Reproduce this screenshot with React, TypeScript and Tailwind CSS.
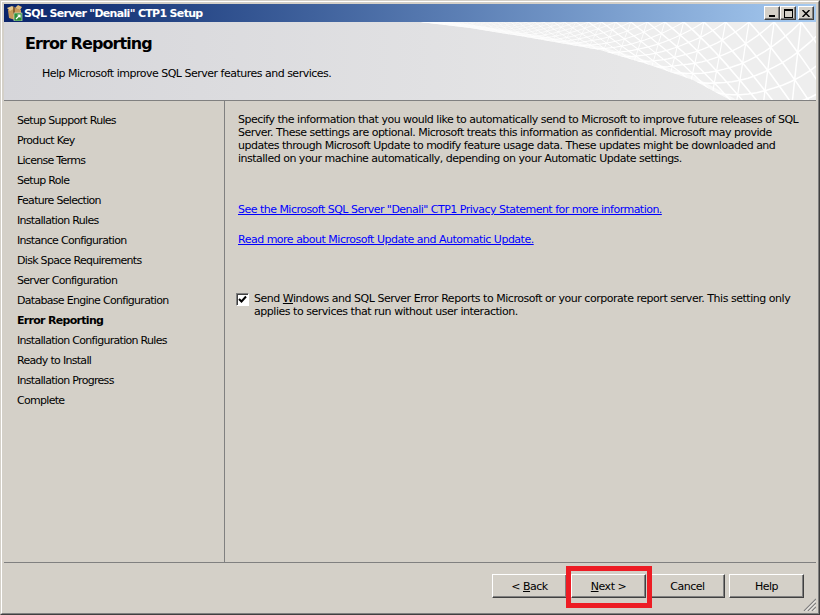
const steps = [
    "Setup Support Rules",
    "Product Key",
    "License Terms",
    "Setup Role",
    "Feature Selection",
    "Installation Rules",
    "Instance Configuration",
    "Disk Space Requirements",
    "Server Configuration",
    "Database Engine Configuration",
    "Error Reporting",
    "Installation Configuration Rules",
    "Ready to Install",
    "Installation Progress",
    "Complete",
];

// lower edge of the mesh, as points read off the screenshot (header coords, y minus 22)
const edge = [
    [420, 0],
    [470, 6],
    [520, 14],
    [600, 28],
    [650, 43],
    [693, 58],
    [730, 78],
    [780, 110],
    [830, 150],
];

const edgeY = (x: number) => {
    for (let i = 1; i < edge.length; i++) {
        if (x <= edge[i][0]) {
            const t = (x - edge[i - 1][0]) / (edge[i][0] - edge[i - 1][0]);
            return edge[i - 1][1] + t * (edge[i][1] - edge[i - 1][1]);
        }
    }
    return 150;
};

const meshPoint = (u: number, v: number) => {
    const x = 830 - 420 * (1 - Math.exp(-u / 14));
    const warped = 1 - Math.pow(1 - v, 1.5);
    return [x - warped * 14, edgeY(x) * warped];
};

const meshLine = (fn: (t: number) => [number, number]) => {
    const pts: string[] = [];
    for (let t = 0; t <= 1.0001; t += 0.05) {
        const [u, v] = fn(t);
        const [x, y] = meshPoint(u, v);
        pts.push(`${x.toFixed(1)},${y.toFixed(1)}`);
    }
    return pts.join(" ");
};

const HeaderMesh = () => {
    const lines: { pts: string; w: number }[] = [];
    const rows = 6;
    for (let i = -rows; i < 60; i++) {
        const w = Math.max(0.35, 1.6 * Math.exp(-Math.max(i, 0) / 14));
        if (i >= 0) lines.push({ pts: meshLine((t) => [i, t]), w });
        lines.push({ pts: meshLine((t) => [i + t * rows, t]), w });
        lines.push({ pts: meshLine((t) => [i + rows - t * rows, t]), w });
    }
    const area = edge.map((p) => `${p[0]},${p[1]}`).join(" ");
    return (
        <svg className="absolute inset-0" width="812" height="78" viewBox="4 0 812 78">
            <defs>
                <clipPath id="meshClip">
                    <polygon points={`${area} 830,0`} />
                </clipPath>
            </defs>
            <polygon points={`${area} 830,0`} fill="#eeeeee" />
            <g clipPath="url(#meshClip)" fill="none" stroke="#ffffff">
                {lines.map((l, i) => (
                    <polyline key={i} points={l.pts} strokeWidth={l.w} />
                ))}
                <polyline points={area} strokeWidth={7} strokeOpacity={0.6} />
            </g>
        </svg>
    );
};

const AppIcon = () => (
    <svg width="16" height="16" viewBox="0 0 16 16" className="shrink-0">
        <path d="M1 5 L8 3 L14 5 L14 13 L8 15 L2 13 Z" fill="#c89a5a" />
        <path d="M0 3 L5 1 L8 3 L3 6 Z" fill="#e8c98e" />
        <path d="M8 3 L11 0 L15 2 L13 5 Z" fill="#e0bb7c" />
        <path d="M6 1 L8 3 L8 10 L6 9 Z" fill="#8a6230" />
        <rect x="7" y="8" width="8" height="8" fill="#2f8f38" stroke="#d8ecd8" strokeWidth="0.6" />
        <path d="M9 14 L13 10 M10.5 10 H13 V12.5" stroke="#ffffff" strokeWidth="1.2" fill="none" />
    </svg>
);

const CaptionButton = ({ children, className = "" }: { children: React.ReactNode; className?: string }) => (
    <div
        className={`flex h-[14px] w-[16px] items-center justify-center border border-t-white border-l-white border-r-[#404040] border-b-[#404040] bg-[#d4d0c8] shadow-[inset_-1px_-1px_0_#808080] ${className}`}
    >
        {children}
    </div>
);

const WizardButton = ({ children }: { children: React.ReactNode }) => (
    <button className="flex h-[24px] w-[75px] items-center justify-center border border-t-white border-l-white border-r-[#404040] border-b-[#404040] bg-[#d4d0c8] text-[#000] shadow-[inset_-1px_-1px_0_#808080]">
        <span>{children}</span>
    </button>
);

export default function App() {
    return (
        <div
            className="relative h-[615px] w-[820px] overflow-hidden border border-t-[#d4d0c8] border-l-[#d4d0c8] border-r-[#404040] border-b-[#404040] text-[11px] leading-[13px] tracking-[-0.5px] text-black"
            style={{ fontFamily: '"DejaVu Sans", sans-serif' }}
        >
            <div className="flex h-full flex-col border border-t-white border-l-white border-r-[#808080] border-b-[#808080] bg-[#d4d0c8] p-[2px]">
                <div className="flex h-[18px] shrink-0 items-center justify-between bg-gradient-to-r from-[#0a246a] to-[#a6caf0] pr-[2px] pl-[3px]">
                    <div className="flex items-center gap-[1px] font-bold tracking-[-0.68px] text-white">
                        <AppIcon />
                        <span>SQL Server "Denali" CTP1 Setup</span>
                    </div>
                    <div className="flex items-center">
                        <CaptionButton>
                            <div className="mt-[6px] mr-[1px] h-[2px] w-[6px] bg-black" />
                        </CaptionButton>
                        <CaptionButton>
                            <div className="h-[9px] w-[9px] border border-t-2 border-black" />
                        </CaptionButton>
                        <CaptionButton className="ml-[2px]">
                            <svg width="8" height="7" viewBox="0 0 8 7">
                                <path d="M0.5 0 L7.5 7 M7.5 0 L0.5 7" stroke="#000" strokeWidth="1.5" />
                            </svg>
                        </CaptionButton>
                    </div>
                </div>

                <div className="relative h-[79px] shrink-0 border-b border-[#808080] bg-gradient-to-r from-[#d6d6da] to-[#ebebeb]">
                    <HeaderMesh />
                    <div className="relative pt-[12px] pl-[21px]">
                        <h1 className="text-[16px] leading-[19px] font-bold tracking-[-0.93px]">Error Reporting</h1>
                        <p className="mt-[14px] pl-[17px]">Help Microsoft improve SQL Server features and services.</p>
                    </div>
                </div>

                <div className="flex min-h-0 flex-1">
                    <div className="w-[221px] shrink-0 border-r border-[#808080] pt-[9px] pl-[13px] tracking-[-0.7px]">
                        {steps.map((step) => (
                            <div key={step} className={`flex h-[20px] items-center ${step === "Error Reporting" ? "font-bold" : ""}`}>
                                {step}
                            </div>
                        ))}
                    </div>
                    <div className="flex-1 pt-[12px] pl-[13px]">
                        <p className="whitespace-nowrap">
                            Specify the information that you would like to automatically send to Microsoft to improve future releases of SQL
                            <br />
                            Server. These settings are optional. Microsoft treats this information as confidential. Microsoft may provide
                            <br />
                            updates through Microsoft Update to modify feature usage data. These updates might be downloaded and
                            <br />
                            installed on your machine automatically, depending on your Automatic Update settings.
                        </p>
                        <p className="mt-[38px] tracking-[-0.52px] text-[#0000ff] underline">
                            See the Microsoft SQL Server "Denali" CTP1 Privacy Statement for more information.
                        </p>
                        <p className="mt-[17px] text-[#0000ff] underline">Read more about Microsoft Update and Automatic Update.</p>
                        <div className="mt-[46px] -ml-[2px] flex gap-[5px]">
                            <div className="mt-[1px] flex h-[13px] w-[13px] shrink-0 items-center justify-center border border-t-[#808080] border-l-[#808080] border-r-white border-b-white bg-white shadow-[inset_1px_1px_0_#404040]">
                                <svg width="9" height="9" viewBox="0 0 9 9">
                                    <path d="M1 4 L3.5 6.5 L8 1.5" stroke="#000" strokeWidth="2" fill="none" />
                                </svg>
                            </div>
                            <p className="whitespace-nowrap tracking-[-0.47px]">
                                Send <span className="underline">W</span>indows and SQL Server Error Reports to Microsoft or your corporate report server. This setting only
                                <br />
                                applies to services that run without user interaction.
                            </p>
                        </div>
                    </div>
                </div>

                <div className="flex h-[49px] shrink-0 justify-end gap-[4px] border-t border-[#808080] pt-[11px] pr-[12px]">
                    <WizardButton>
                        &lt; <span className="underline">B</span>ack
                    </WizardButton>
                    <WizardButton>
                        <span className="underline">N</span>ext &gt;
                    </WizardButton>
                    <WizardButton>Cancel</WizardButton>
                    <WizardButton>Help</WizardButton>
                </div>
            </div>

            <div className="absolute top-[565px] left-[565px] h-[42px] w-[86px] border-[5px] border-[#ed1c24]" />

            <svg className="absolute right-[3px] bottom-[3px]" width="13" height="13" viewBox="0 0 13 13">
                <path d="M1 13 L13 1 M5 13 L13 5 M9 13 L13 9" stroke="#808080" strokeWidth="1.2" />
                <path d="M2.5 13 L13 2.5 M6.5 13 L13 6.5 M10.5 13 L13 10.5" stroke="#ffffff" strokeWidth="0.8" />
            </svg>
        </div>
    );
}
